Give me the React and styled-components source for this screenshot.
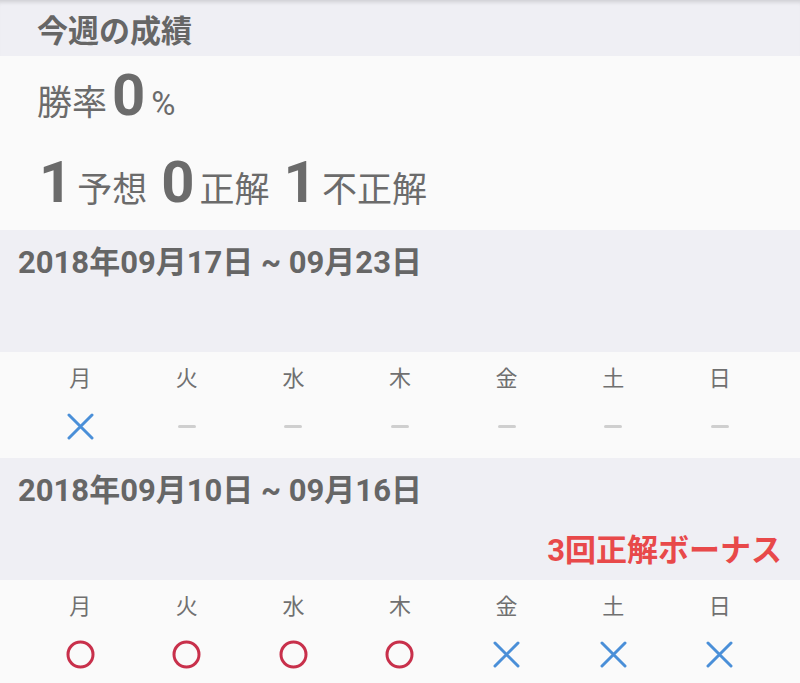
import React from "react";
import styled, { createGlobalStyle } from "styled-components";

const Global = createGlobalStyle`
  html, body { margin: 0; padding: 0; background: #fafafa; }
  body {
    font-family: Roboto, "Noto Sans CJK JP", "Noto Sans", sans-serif;
    color: #6b6b6b;
    overflow: hidden;
  }
`;

const Page = styled.div`
  width: 800px;
  height: 683px;
  overflow: hidden;
  background: #fafafa;
`;

const SectionHeader = styled.div`
  height: 56px;
  background: #efeff4;
  box-shadow: inset 0 5px 4px -3px rgba(0, 0, 0, 0.14);
  display: flex;
  align-items: center;
  padding-left: 37px;
  font-size: 31px;
  font-weight: 700;
  color: #666;
`;

const Stats = styled.div`
  height: 174px;
  background: #fafafa;
  display: flex;
  flex-direction: column;
  padding-left: 37px;
  box-sizing: border-box;
`;

const StatRow = styled.div`
  display: flex;
  align-items: baseline;
  height: ${(p) => p.$h}px;
  padding-top: ${(p) => p.$top}px;
  box-sizing: border-box;
`;

const Label = styled.span`
  font-size: ${(p) => p.$size || 35}px;
  line-height: 40px;
  color: #6b6b6b;
  margin-right: ${(p) => p.$mr || 0}px;
`;

const Num = styled.span`
  font-size: 58px;
  line-height: 58px;
  font-weight: 700;
  color: #6b6b6b;
  margin-right: ${(p) => p.$mr || 0}px;
  margin-left: ${(p) => p.$ml || 0}px;
`;

const WeekHeader = styled.div`
  height: 122px;
  background: #efeff4;
  display: flex;
  flex-direction: column;
  padding: 15px 18px 11px 18px;
  box-sizing: border-box;
`;

const DateTitle = styled.div`
  font-size: 31px;
  line-height: 36px;
  font-weight: 700;
  color: #666;
`;

const Bonus = styled.div`
  margin-top: auto;
  align-self: flex-end;
  font-size: 31px;
  line-height: 36px;
  font-weight: 700;
  color: #e8494a;
`;

const Days = styled.div`
  height: 106px;
  display: grid;
  grid-template-columns: repeat(7, 1fr);
  padding: 0 27px;
  background: #fafafa;
`;

const DayCell = styled.div`
  display: flex;
  flex-direction: column;
  align-items: center;
  padding-top: 15px;
`;

const DayLabel = styled.div`
  font-size: 22px;
  line-height: 24px;
  color: #707070;
`;

const MarkBox = styled.div`
  margin-top: 21px;
  width: 30px;
  height: 28px;
  display: flex;
  align-items: center;
  justify-content: center;
`;

const Dash = styled.div`
  width: 18px;
  height: 3px;
  border-radius: 2px;
  background: #cfcfcf;
`;

const Cross = () => (
  <svg width="27" height="27" viewBox="0 0 27 27">
    <path d="M2 2 L25 25 M25 2 L2 25" stroke="#4a8fd8" strokeWidth="3" strokeLinecap="round" fill="none" />
  </svg>
);

const Circle = () => (
  <svg width="29" height="29" viewBox="0 0 29 29">
    <circle cx="14.5" cy="14.5" r="12.5" stroke="#c8304b" strokeWidth="3" fill="none" />
  </svg>
);

const DAY_NAMES = ["月", "火", "水", "木", "金", "土", "日"];

const Mark = ({ v }) => (
  <MarkBox>{v === "x" ? <Cross /> : v === "o" ? <Circle /> : <Dash />}</MarkBox>
);

const Week = ({ range, bonus, results }) => (
  <>
    <WeekHeader>
      <DateTitle>{range}</DateTitle>
      {bonus && <Bonus>{bonus}</Bonus>}
    </WeekHeader>
    <Days>
      {DAY_NAMES.map((d, i) => (
        <DayCell key={d}>
          <DayLabel>{d}</DayLabel>
          <Mark v={results[i]} />
        </DayCell>
      ))}
    </Days>
  </>
);

export default function App() {
  return (
    <Page>
      <Global />
      <SectionHeader>今週の成績</SectionHeader>
      <Stats>
        <StatRow $h={87} $top={10}>
          <Label $mr={5}>勝率</Label>
          <Num $mr={6}>0</Num>
          <Label $size={33}>%</Label>
        </StatRow>
        <StatRow $h={87} $top={10}>
          <Num $ml={2} $mr={5}>1</Num>
          <Label $mr={14}>予想</Label>
          <Num $mr={5}>0</Num>
          <Label $mr={14}>正解</Label>
          <Num $mr={5}>1</Num>
          <Label>不正解</Label>
        </StatRow>
      </Stats>
      <Week range="2018年09月17日 ~ 09月23日" results={["x", "-", "-", "-", "-", "-", "-"]} />
      <Week
        range="2018年09月10日 ~ 09月16日"
        bonus="3回正解ボーナス"
        results={["o", "o", "o", "o", "x", "x", "x"]}
      />
    </Page>
  );
}
